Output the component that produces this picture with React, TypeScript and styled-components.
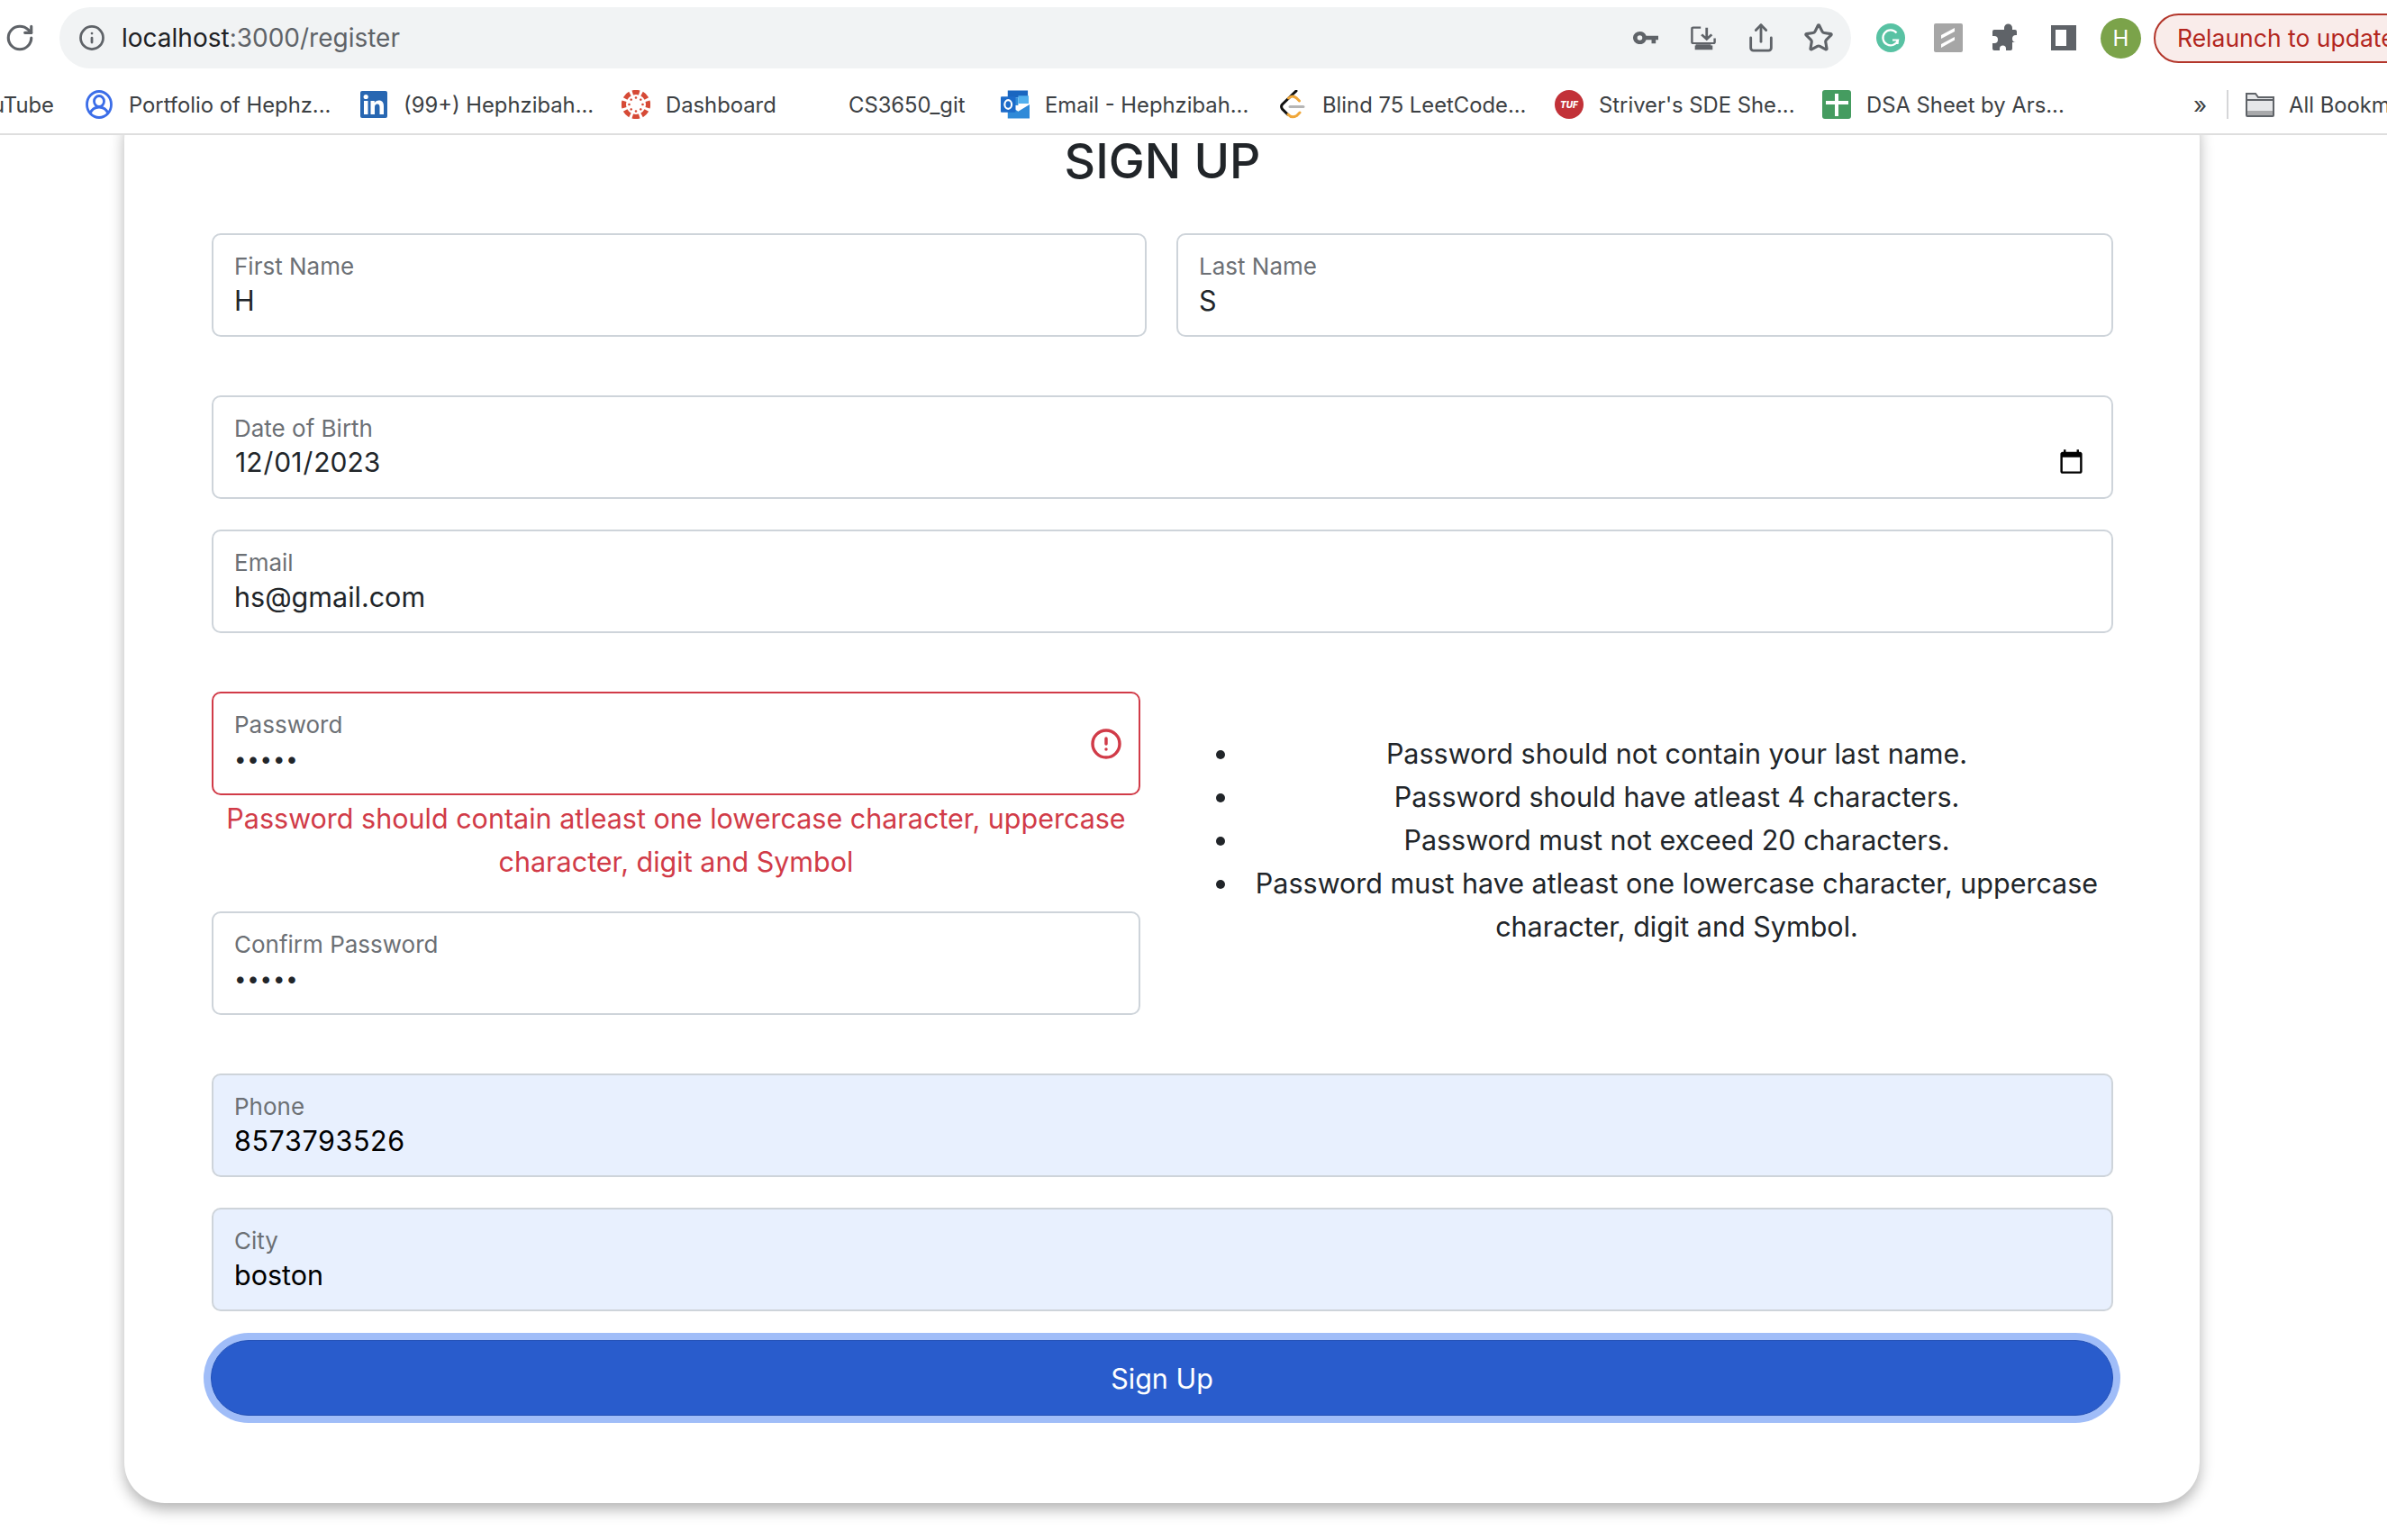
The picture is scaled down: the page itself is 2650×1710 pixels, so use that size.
import React from "react";
import styled, { createGlobalStyle } from "styled-components";
import { CircleAlert, Info, RotateCw, Share, Star } from "lucide-react";

const UI_FONT = `Inter, "Liberation Sans", sans-serif`;

const GlobalStyle = createGlobalStyle`
  html, body {
    margin: 0;
    padding: 0;
    width: 2650px;
    height: 1710px;
    overflow: hidden;
    background: #fff;
    font-family: ${UI_FONT};
  }
  * { box-sizing: border-box; }
`;

/* ---- browser icons ---- */
const KeyIcon = () => (
  <svg width="28" height="16" viewBox="0 0 30 18" preserveAspectRatio="none" fill="#5f6368">
    <path d="M8 1a8 8 0 0 1 7.6 5.5H30v5h-3V16h-5v-4.500h-6.400A8 8 0 1 1 8 1zm0 5a3 3 0 1 0 0 6 3 3 0 0 0 0-6z" />
  </svg>
);

const InstallIcon = () => (
  <svg width="28" height="27" viewBox="0 0 30 32" preserveAspectRatio="none" fill="none" stroke="#5f6368" strokeWidth="2.600">
    <path d="M12 2H3a1.500 1.500 0 0 0-1.500 1.500V21a1.500 1.500 0 0 0 1.500 1.500h24a1.500 1.500 0 0 0 1.500-1.500v-5" />
    <path d="M19 2v14M13 11l6 6 6-6" strokeWidth="3" />
    <path d="M6 24h18v1.500h2V31H5v-5.500h1z" fill="#5f6368" stroke="none" />
  </svg>
);

const GrammarlyIcon = () => (
  <svg width="32" height="32" viewBox="0 0 32 32">
    <circle cx="16" cy="16" r="16" fill="#58c2a3" />
    <path d="M22.500 10.500a8.500 8.500 0 1 0 1.500 8h-6M24 18.500l-.5 4.500" fill="none" stroke="#fff" strokeWidth="2.200" />
  </svg>
);

const SlashIcon = () => (
  <svg width="32" height="32" viewBox="0 0 32 32">
    <rect width="32" height="32" rx="2" fill="#a6a6a6" />
    <path d="M8 13l15-8v4L8 17zM8 23l15-8v3.500L8 27z" fill="#fff" />
  </svg>
);

const PuzzleIcon = () => (
  <svg width="30" height="32" viewBox="0 0 30 32" fill="#5f6368">
    <path d="M10 7h3V5a4.500 4.500 0 0 1 9 0v2h3a2 2 0 0 1 2 2v4h-1a4 4 0 0 0 0 8h1v0l-5 0v7a2 2 0 0 1-2 2h-5v-2a3.500 3.500 0 0 0-7 0v2H2a2 2 0 0 1-2-2v-6h2a4 4 0 0 0 0-8H0V9a2 2 0 0 1 2-2z" />
  </svg>
);

const SidePanelIcon = () => (
  <svg width="28" height="28" viewBox="0 0 28 28">
    <path fillRule="evenodd" d="M0 0h28v28H0zM5 5v18h12V5z" fill="#5f6368" />
  </svg>
);

/* ---- bookmark favicons ---- */
const PortfolioIcon = () => (
  <svg width="30" height="32" viewBox="0 0 30 32" fill="none" stroke="#3b6de8" strokeWidth="2.800">
    <ellipse cx="15" cy="16" rx="13.500" ry="14.500" />
    <ellipse cx="15" cy="12.500" rx="5.500" ry="6" />
    <path d="M5 26c2-5 6-7 10-7s8 2 10 7" />
  </svg>
);

const LinkedInIcon = () => (
  <svg width="30" height="30" viewBox="0 0 30 30">
    <rect width="30" height="30" rx="2" fill="#2867b2" />
    <rect x="4" y="11" width="4.500" height="15" fill="#fff" />
    <circle cx="6.200" cy="6.500" r="2.600" fill="#fff" />
    <path d="M11.500 11h4.300v2.200c1-1.600 2.600-2.600 4.700-2.600 4 0 5.500 2.500 5.500 6.400V26h-4.500v-8c0-2-.7-3.500-2.600-3.500S16 16 16 18v8h-4.500z" fill="#fff" />
  </svg>
);

const CanvasIcon = () => (
  <svg width="32" height="32" viewBox="-16 -16 32 32" fill="#d64a36">
    {[0, 45, 90, 135, 180, 225, 270, 315].map((deg) => (
      <g key={deg} transform={`rotate(${deg})`}>
        <path d="M-4.500 -15.500a16 16 0 0 1 9 0L3 -10.500a10 10 0 0 0-6 0z" />
        <circle cx="0" cy="-7.500" r="1.300" />
      </g>
    ))}
  </svg>
);

const OutlookIcon = () => (
  <svg width="33" height="32" viewBox="0 0 33 32">
    <rect x="8" y="0" width="23" height="8" fill="#1a66c0" />
    <rect x="8" y="8" width="12" height="9" fill="#2f8ad8" />
    <rect x="20" y="6" width="12" height="9" fill="#52b0ee" />
    <path d="M8 16l12 8 13-8v16H8z" fill="#2f8ad8" />
    <rect x="0" y="7" width="17" height="18" rx="1" fill="#1d6bc9" />
    <ellipse cx="8.500" cy="16" rx="4" ry="5" fill="none" stroke="#fff" strokeWidth="2.200" />
  </svg>
);

const LeetCodeIcon = () => (
  <svg width="28" height="32" viewBox="0 0 28 32" fill="none" strokeLinecap="round">
    <path d="M18 1L2.500 16c-1.500 1.800-1 3.500 0 5l6 6" stroke="#111" strokeWidth="3" />
    <path d="M9 27c2.500 3 6 3.500 9.500 1.500L22 25M9.500 9c3-3 6-2.500 9 0l3 3" stroke="#f0a73a" strokeWidth="3" />
    <path d="M11 18.500h15" stroke="#b5b5b5" strokeWidth="3" />
  </svg>
);

const TufIcon = () => (
  <svg width="32" height="32" viewBox="0 0 32 32">
    <circle cx="16" cy="16" r="16" fill="#c23138" />
    <text x="16" y="19.500" textAnchor="middle" fontSize="10" fontWeight="800" fontStyle="italic" fill="#fff" fontFamily="Inter, sans-serif">
      TUF
    </text>
  </svg>
);

const SheetIcon = () => (
  <svg width="32" height="32" viewBox="0 0 32 32">
    <rect width="32" height="32" rx="3" fill="#459c60" />
    <path d="M14 4h4v8h11v4H18v13h-4V16H4v-4h10z" fill="#fff" />
  </svg>
);

const FolderIcon = () => (
  <svg width="34" height="28" viewBox="0 0 34 28">
    <path d="M2 2h10l3 4h17v20a1 1 0 0 1-1 1H3a1 1 0 0 1-1-1z" fill="#e6e7e9" stroke="#5f6368" strokeWidth="2" />
    <path d="M2 9h30" stroke="#5f6368" strokeWidth="2" />
    <rect x="3" y="21" width="28" height="5" fill="#a8a9ab" />
  </svg>
);

/* ---- browser chrome ---- */
const Chrome = styled.header`
  position: relative;
  z-index: 2;
  background: #fff;
  border-bottom: 2px solid #dedede;
  height: 150px;
  overflow: hidden;
`;

const TopBar = styled.div`
  display: flex;
  align-items: center;
  height: 84px;
`;

const ReloadSlot = styled.div`
  flex: none;
  width: 66px;
  padding-left: 5px;
  display: flex;
  color: #5f6368;
`;

const UrlPill = styled.div`
  flex: none;
  width: 1989px;
  height: 68px;
  border-radius: 34px;
  background: #f1f3f4;
  display: flex;
  align-items: center;
  padding: 0 19px 0 21px;
  color: #5f6368;
`;

const Url = styled.div`
  margin-left: 18px;
  flex: 1;
  font-size: 28px;
  color: #5f6368;
  b {
    font-weight: 400;
    color: #202124;
  }
`;

const IconSlot = styled.div<{ $gap?: number }>`
  flex: none;
  width: 34px;
  height: 40px;
  margin-left: ${({ $gap }) => $gap ?? 30}px;
  display: flex;
  align-items: center;
  justify-content: center;
  color: #5f6368;
`;

const Avatar = styled.div`
  flex: none;
  width: 45px;
  height: 45px;
  margin-left: 24px;
  border-radius: 50%;
  background: #7ba34a;
  color: #fff;
  font-size: 24px;
  display: flex;
  align-items: center;
  justify-content: center;
`;

const RelaunchPill = styled.div`
  flex: none;
  height: 55px;
  margin-left: 14px;
  padding: 0 24px;
  border: 2.500px solid #b3362b;
  border-radius: 28px;
  background: #f9ecea;
  color: #b3261e;
  font-size: 26.500px;
  display: flex;
  align-items: center;
  white-space: nowrap;
`;

const BookmarkBar = styled.nav`
  display: flex;
  align-items: center;
  height: 64px;
  gap: 34px;
  white-space: nowrap;
  font-size: 23.800px;
  color: #3c4043;
`;

const Bookmark = styled.div`
  flex: none;
  display: flex;
  align-items: center;
  gap: 17px;
`;

const Favicon = styled.span`
  flex: none;
  width: 32px;
  height: 32px;
  display: flex;
  align-items: center;
  justify-content: center;
`;

const BookmarkText = styled.span<{ $w: number }>`
  display: block;
  flex: none;
  width: ${({ $w }) => $w}px;
`;

const ClippedBookmark = styled(BookmarkText)`
  margin-left: -9px;
`;

const More = styled.span`
  flex: none;
  margin-left: 112px;
  font-size: 26px;
  width: 14px;
`;

const Divider = styled.span`
  flex: none;
  width: 2px;
  height: 32px;
  margin-left: -11px;
  background: #d5d6d8;
`;

const AllBookmarks = styled.div`
  flex: none;
  display: flex;
  align-items: center;
  gap: 15px;
  margin-left: -16px;
`;

/* ---- page ---- */
const Main = styled.main`
  height: 1560px;
  overflow: hidden;
`;

const Card = styled.section`
  width: 2304px;
  margin: -40px 0 0 138px;
  padding: 34px 96px 97px 97px;
  border-radius: 45px;
  background: #fff;
  box-shadow: 0 7px 16px rgba(0, 0, 0, 0.3);
`;

const Title = styled.h1`
  margin: 0 0 45px;
  height: 70px;
  line-height: 70px;
  text-align: center;
  font-size: 53.500px;
  font-weight: 500;
  color: #212529;
`;

const Row = styled.div<{ $mb?: number }>`
  display: grid;
  grid-template-columns: 1038px 1040px;
  column-gap: 33px;
  margin-bottom: ${({ $mb }) => $mb ?? 0}px;
`;

const PasswordRow = styled.div`
  display: grid;
  grid-template-columns: 1031px 1040px;
  column-gap: 40px;
  margin-bottom: 65px;
`;

const Field = styled.label<{ $mb?: number; $invalid?: boolean; $filled?: boolean }>`
  display: flex;
  align-items: center;
  height: 115px;
  margin-bottom: ${({ $mb }) => $mb ?? 0}px;
  padding: 0 ${({ $invalid }) => ($invalid ? 18 : 21)}px 0 23px;
  border: 2px solid ${({ $invalid }) => ($invalid ? "#d13b48" : "#ced4da")};
  border-radius: 10px;
  background: ${({ $filled }) => ($filled ? "#e8f0fe" : "#fff")};
`;

const FieldBody = styled.div`
  flex: 1;
  min-width: 0;
  align-self: flex-start;
  padding-top: 19px;
`;

const FieldLabel = styled.span`
  display: block;
  height: 33px;
  line-height: 32px;
  font-size: 26px;
  color: #6c7075;
`;

const Input = styled.input<{ $dark?: boolean; $tracking?: number }>`
  display: block;
  width: 100%;
  height: 40px;
  padding: 0;
  border: none;
  outline: none;
  background: transparent;
  font-family: ${UI_FONT};
  font-size: 30.500px;
  letter-spacing: ${({ $tracking }) => $tracking ?? 0}px;
  color: ${({ $dark }) => ($dark ? "#000" : "#212529")};

  &[type="password"] {
    letter-spacing: 0.800px;
    font-size: 24px;
  }
  &[type="date"] {
    font-size: 30px;
  }
  &[type="date"]::-webkit-calendar-picker-indicator {
    width: 31px;
    height: 31px;
    margin: 0 8px 0 0;
    padding: 0;
    opacity: 1;
  }
  &[type="date"]::-webkit-datetime-edit,
  &[type="date"]::-webkit-datetime-edit-fields-wrapper {
    padding: 0;
  }
`;

const ErrorText = styled.p`
  margin: 2px 0 31px;
  text-align: center;
  font-size: 30.500px;
  line-height: 48px;
  color: #d13b48;
`;

const Rules = styled.ul`
  margin: 45px 0 0;
  padding: 0 0 0 71px;
  list-style: disc;
  font-size: 30.500px;
  line-height: 48px;
  color: #212529;

  li {
    text-align: center;
  }
`;

const SubmitButton = styled.button`
  display: block;
  width: 2112px;
  height: 84px;
  margin: 32px 0 0 -1px;
  border: 1px solid #2351b6;
  border-radius: 42px;
  background: #295ccc;
  box-shadow: 0 0 0 8px #a0bdf8;
  color: #fff;
  font-family: ${UI_FONT};
  font-size: 30.500px;
`;

const bookmarks = [
  { icon: <PortfolioIcon />, text: "Portfolio of Hephz...", w: 222 },
  { icon: <LinkedInIcon />, text: "(99+) Hephzibah...", w: 208 },
  { icon: <CanvasIcon />, text: "Dashboard", w: 120 },
  { icon: null, text: "CS3650_git", w: 135 },
  { icon: <OutlookIcon />, text: "Email - Hephzibah...", w: 225 },
  { icon: <LeetCodeIcon />, text: "Blind 75 LeetCode...", w: 224 },
  { icon: <TufIcon />, text: "Striver's SDE She...", w: 214 },
  { icon: <SheetIcon />, text: "DSA Sheet by Ars...", w: 217 },
];

const rules = [
  "Password should not contain your last name.",
  "Password should have atleast 4 characters.",
  "Password must not exceed 20 characters.",
  "Password must have atleast one lowercase character, uppercase character, digit and Symbol.",
];

const App: React.FC = () => {
  return (
    <>
      <GlobalStyle />
      <Chrome>
        <TopBar>
          <ReloadSlot>
            <RotateCw size={34} strokeWidth={2.2} />
          </ReloadSlot>
          <UrlPill>
            <Info size={30} strokeWidth={2.2} />
            <Url>
              <b>localhost</b>:3000/register
            </Url>
            <IconSlot><KeyIcon /></IconSlot>
            <IconSlot><InstallIcon /></IconSlot>
            <IconSlot><Share size={36} strokeWidth={2} /></IconSlot>
            <IconSlot><Star size={34} strokeWidth={2.2} /></IconSlot>
          </UrlPill>
          <IconSlot $gap={27}><GrammarlyIcon /></IconSlot>
          <IconSlot><SlashIcon /></IconSlot>
          <IconSlot><PuzzleIcon /></IconSlot>
          <IconSlot><SidePanelIcon /></IconSlot>
          <Avatar>H</Avatar>
          <RelaunchPill>Relaunch to update</RelaunchPill>
        </TopBar>
        <BookmarkBar>
          <ClippedBookmark $w={69}>uTube</ClippedBookmark>
          {bookmarks.map((b) => (
            <Bookmark key={b.text}>
              <Favicon>{b.icon}</Favicon>
              <BookmarkText $w={b.w}>{b.text}</BookmarkText>
            </Bookmark>
          ))}
          <More>»</More>
          <Divider />
          <AllBookmarks>
            <FolderIcon />
            All Bookmarks
          </AllBookmarks>
        </BookmarkBar>
      </Chrome>
      <Main>
        <Card>
          <Title>SIGN UP</Title>
          <form onSubmit={(e) => e.preventDefault()}>
            <Row $mb={65}>
              <Field>
                <FieldBody>
                  <FieldLabel>First Name</FieldLabel>
                  <Input defaultValue="H" />
                </FieldBody>
              </Field>
              <Field>
                <FieldBody>
                  <FieldLabel>Last Name</FieldLabel>
                  <Input defaultValue="S" />
                </FieldBody>
              </Field>
            </Row>
            <Field $mb={34}>
              <FieldBody>
                <FieldLabel>Date of Birth</FieldLabel>
                <Input type="date" defaultValue="2023-12-01" />
              </FieldBody>
            </Field>
            <Field $mb={65}>
              <FieldBody>
                <FieldLabel>Email</FieldLabel>
                <Input defaultValue="hs@gmail.com" />
              </FieldBody>
            </Field>
            <PasswordRow>
              <div>
                <Field $invalid>
                  <FieldBody>
                    <FieldLabel>Password</FieldLabel>
                    <Input type="password" defaultValue="aaaaa" />
                  </FieldBody>
                  <CircleAlert size={36} color="#d13b48" strokeWidth={2.3} />
                </Field>
                <ErrorText>
                  Password should contain atleast one lowercase character, uppercase character, digit and Symbol
                </ErrorText>
                <Field>
                  <FieldBody>
                    <FieldLabel>Confirm Password</FieldLabel>
                    <Input type="password" defaultValue="aaaaa" />
                  </FieldBody>
                </Field>
              </div>
              <Rules>
                {rules.map((r) => (
                  <li key={r}>{r}</li>
                ))}
              </Rules>
            </PasswordRow>
            <Field $mb={34} $filled>
              <FieldBody>
                <FieldLabel>Phone</FieldLabel>
                <Input $dark $tracking={0.6} defaultValue="8573793526" />
              </FieldBody>
            </Field>
            <Field $filled>
              <FieldBody>
                <FieldLabel>City</FieldLabel>
                <Input $dark defaultValue="boston" />
              </FieldBody>
            </Field>
            <SubmitButton type="submit">Sign Up</SubmitButton>
          </form>
        </Card>
      </Main>
    </>
  );
};

export default App;
